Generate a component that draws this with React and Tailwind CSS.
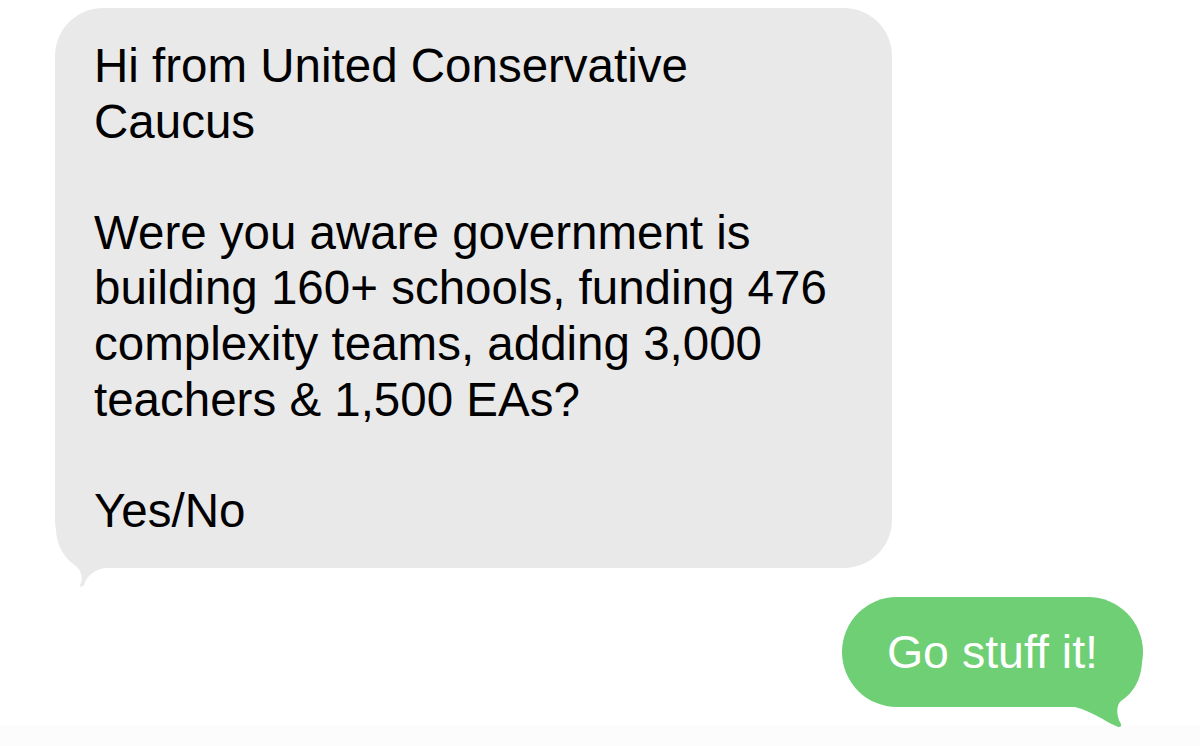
import React from "react";

export default function App() {
  const lines = [
    "Hi from United Conservative",
    "Caucus",
    "\u00a0",
    "Were you aware government is",
    "building 160+ schools, funding 476",
    "complexity teams, adding 3,000",
    "teachers & 1,500 EAs?",
    "\u00a0",
    "Yes/No",
  ];
  return (
    <div
      className="w-full h-[746px] bg-white flex flex-col overflow-hidden"
      style={{ fontFamily: '"Liberation Sans", Arial, sans-serif' }}
    >
      <div className="relative ml-[55px] mt-[8px] w-[837px] h-[560px] rounded-[48px] bg-[#e9e9e9] pt-[30px] pl-[39px] text-black text-[47.5px] leading-[55.6px]">
        {lines.map((l, i) => (
          <div key={i} className="relative z-10 whitespace-nowrap">
            {l}
          </div>
        ))}
        <svg
          className="absolute left-0 top-[500px]"
          width="70"
          height="90"
          viewBox="0 0 70 90"
        >
          <path
            d="M1 0 L1 20 C1 38 10 51 22 59 C27 64 28 72 25 77 C24 79 27 79 29 77 C31 70 37 62 50 60 L50 0 Z"
            fill="#e9e9e9"
          />
        </svg>
      </div>
      <div className="relative ml-[842px] mt-[29px] w-[301px] h-[110px] rounded-full bg-[#6fcf75] flex items-center justify-center text-white text-[46.5px] leading-[56px]">
        <svg
          className="absolute left-[228px] top-[58px]"
          width="80"
          height="80"
          viewBox="0 0 80 80"
        >
          <path
            d="M5 5 L72 5 C72 25 62 39 51 46 C46 50 46 61 51 69 C52 72 49 73 46 71 C34 66 24 57 5 52 Z"
            fill="#6fcf75"
          />
        </svg>
        <span className="relative z-10 whitespace-nowrap">Go stuff it!</span>
      </div>
      <div className="mt-auto h-[21px] bg-[#fcfcfc]" />
    </div>
  );
}
